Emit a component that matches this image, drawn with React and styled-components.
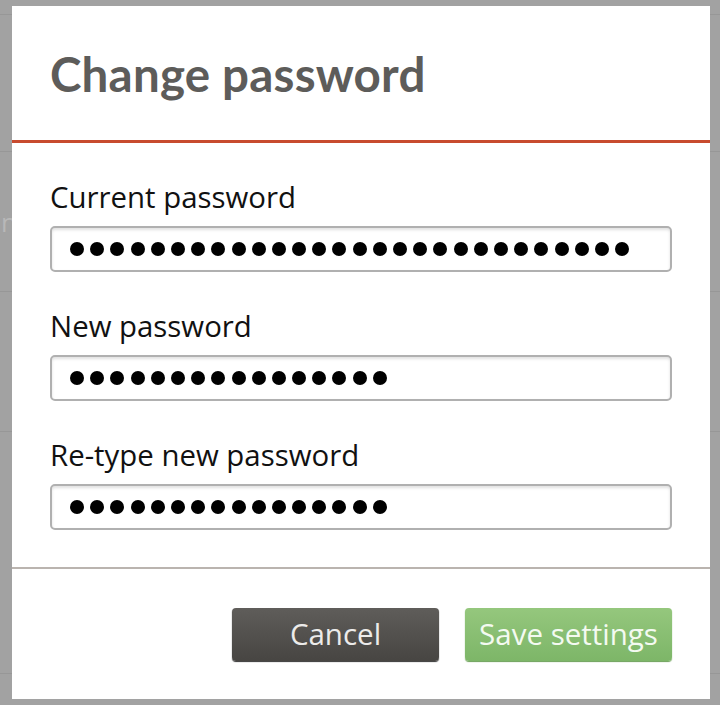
import React from "react";
import styled, { createGlobalStyle } from "styled-components";

const GlobalStyle = createGlobalStyle`
  html, body {
    margin: 0;
    padding: 0;
    background: #a2a2a2;
    font-family: "Open Sans", "Noto Sans", sans-serif;
  }
  * { box-sizing: border-box; }
`;

const Page = styled.div`
  position: relative;
  width: 720px;
  height: 705px;
  overflow: hidden;
  background: #a2a2a2;
`;

const BgRow = styled.div`
  height: ${(p) => p.h}px;
  border-bottom: 1px solid #979797;
  display: flex;
  align-items: center;
  color: #b8b8b8;
  font-size: 26px;
`;

const BgText = styled.span`
  margin-left: -62px;
`;

const Modal = styled.div`
  position: absolute;
  left: 12px;
  top: 6px;
  width: 698px;
  background: #fff;
  display: flex;
  flex-direction: column;
`;

const Header = styled.div`
  height: 137px;
  padding: 0 38px;
  display: flex;
  align-items: center;
  border-bottom: 3px solid #c84b2f;
`;

const Title = styled.h1`
  margin: 0;
  font-family: "Lato", "Open Sans", sans-serif;
  font-weight: 700;
  font-size: 47.5px;
  color: #5d5c5a;
  letter-spacing: 0.2px;
`;

const Body = styled.div`
  padding: 36px 38px 37px;
  display: flex;
  flex-direction: column;
  gap: 36px;
`;

const Field = styled.div`
  display: flex;
  flex-direction: column;
`;

const Label = styled.label`
  font-size: 29.4px;
  line-height: 36px;
  color: #111;
  margin-bottom: 11px;
`;

const Input = styled.div`
  height: 46px;
  border: 2px solid #b0b0b0;
  border-radius: 5px;
  box-shadow: inset 0 2px 3px rgba(0, 0, 0, 0.12);
  padding-left: 18px;
  display: flex;
  align-items: center;
  gap: 6.2px;
`;

const Dot = styled.span`
  width: 14px;
  height: 14px;
  border-radius: 50%;
  background: #000;
  flex: none;
`;

const Footer = styled.div`
  border-top: 2px solid #bab4af;
  padding: 39px 38px 38px;
  display: flex;
  justify-content: flex-end;
  gap: 26px;
`;

const Button = styled.button`
  width: 207px;
  height: 53px;
  border: none;
  border-radius: 4px;
  font-family: "Open Sans", "Noto Sans", sans-serif;
  font-size: 29.5px;
  padding: 0 0 2px;
  color: ${(p) => (p.primary ? "#f4faf1" : "#ecebea")};
  background: ${(p) =>
    p.primary
      ? "linear-gradient(#95c77d, #7db668)"
      : "linear-gradient(#5f5d5a, #474542)"};
  box-shadow: 0 1px 1px ${(p) => (p.primary ? "#6a9f56" : "#333")};
`;

const fields = [
  { label: "Current password", count: 28 },
  { label: "New password", count: 16 },
  { label: "Re-type new password", count: 16 },
];

export default function App() {
  return (
    <Page>
      <GlobalStyle />
      <BgRow h={15} />
      <BgRow h={137} />
      <BgRow h={140}>
        <BgText>Admini</BgText>
      </BgRow>
      <BgRow h={140} />
      <BgRow h={242} />
      <Modal>
        <Header>
          <Title>Change password</Title>
        </Header>
        <Body>
          {fields.map((f) => (
            <Field key={f.label}>
              <Label>{f.label}</Label>
              <Input>
                {Array.from({ length: f.count }).map((_, i) => (
                  <Dot key={i} />
                ))}
              </Input>
            </Field>
          ))}
        </Body>
        <Footer>
          <Button>Cancel</Button>
          <Button primary>Save settings</Button>
        </Footer>
      </Modal>
    </Page>
  );
}
